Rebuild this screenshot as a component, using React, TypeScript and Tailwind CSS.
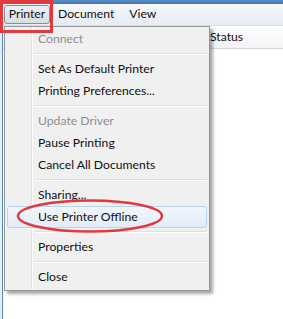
import React from "react";

type Item = { label: string; disabled?: boolean; active?: boolean } | "sep";

const items: Item[] = [
  { label: "Connect", disabled: true },
  "sep",
  { label: "Set As Default Printer" },
  { label: "Printing Preferences..." },
  "sep",
  { label: "Update Driver", disabled: true },
  { label: "Pause Printing" },
  { label: "Cancel All Documents" },
  "sep",
  { label: "Sharing..." },
  { label: "Use Printer Offline", active: true },
  "sep",
  { label: "Properties" },
  "sep",
  { label: "Close" },
];

export default function App() {
  return (
    <div
      className="relative w-[283px] h-[319px] overflow-hidden bg-white text-[12.2px] text-[#111]"
      style={{ fontFamily: 'Lato, "Noto Sans", sans-serif' }}
    >
      {/* window frame strip */}
      <div className="h-[4px] bg-gradient-to-b from-[#5a8fc4] to-[#3f77b0]" />

      {/* menu bar */}
      <div className="flex items-center h-[22px] pl-[4px] bg-gradient-to-b from-[#f6f8fb] to-[#e6ecf3] border-b border-[#d6dde7]">
        <div className="h-[19px] w-[46px] flex items-center justify-center rounded-[3px] border border-[#8a8f96] bg-gradient-to-b from-[#eef0f2] to-[#d9dde1]">
          Printer
        </div>
        <div className="ml-[8px]">Document</div>
        <div className="ml-[15px]">View</div>
      </div>

      {/* window body */}
      <div className="flex h-[293px]">
        <div className="w-[2px] bg-[#e8eef5]" />
        <div className="w-[1px] bg-[#4f86bd]" />
        <div className="flex-1 flex flex-col">
          <div className="flex h-[23px] bg-gradient-to-b from-[#ffffff] to-[#f3f4f6] border-b border-[#d5d5d5]">
            <div className="w-[205px] border-r border-[#d5d5d5]" />
            <div className="pl-[2px] flex items-center">Status</div>
          </div>
          <div className="flex-1" />
        </div>
      </div>

      {/* dropdown menu */}
      <div className="absolute left-[4px] top-[26px] w-[206px] h-[265px] bg-[#f0f0f0] border border-[#979797] shadow-[3px_3px_3px_rgba(0,0,0,0.35)] pt-[1px] flex">
        <div className="absolute left-[26px] top-0 bottom-0 w-[1px] bg-[#e2e3e3]" />
        <div className="absolute left-[27px] top-0 bottom-0 w-[1px] bg-white" />
        <div className="relative flex-1 flex flex-col px-[2px]">
          {items.map((it, i) =>
            it === "sep" ? (
              <div key={i} className="ml-[28px] h-[8px] flex flex-col justify-center">
                <div className="h-[1px] bg-[#e0e0e0]" />
                <div className="h-[1px] bg-white" />
              </div>
            ) : (
              <div
                key={i}
                className={`h-[22px] flex items-center pl-[30px] rounded-[3px] border ${
                  it.active
                    ? "bg-gradient-to-b from-[#f1f6fd] to-[#e2ecf9] border-[#b8d2f0]"
                    : "border-transparent"
                } ${it.disabled ? "text-[#8e8e8e]" : ""}`}
              >
                {it.label}
              </div>
            )
          )}
        </div>
      </div>

      {/* annotations */}
      <div className="absolute left-[0px] top-[0px] w-[53px] h-[33px] border-[3px] border-[#e0393e]" />
      <svg className="absolute left-[16px] top-[198px]" width="150" height="36" viewBox="0 0 150 36">
        <ellipse cx="74" cy="18" rx="72" ry="15.5" fill="none" stroke="#e0393e" strokeWidth="2.5" />
      </svg>
    </div>
  );
}
